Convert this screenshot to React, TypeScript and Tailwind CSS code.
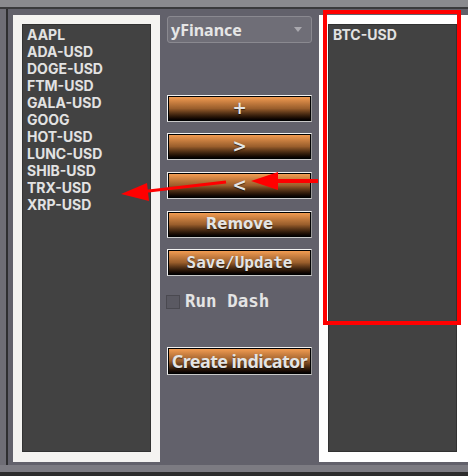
import React from 'react';

const left = ['AAPL', 'ADA-USD', 'DOGE-USD', 'FTM-USD', 'GALA-USD', 'GOOG', 'HOT-USD', 'LUNC-USD', 'SHIB-USD', 'TRX-USD', 'XRP-USD'];
const right = ['BTC-USD'];

function OrangeButton({ label, className, textClass }: { label: string; className?: string; textClass: string }) {
  return (
    <div className={`w-[145px] h-[27px] border border-t-[#f2f2f2] border-l-[#f2f2f2] border-r-[#9a9a9a] border-b-[#c8c8c8] ${className ?? ''}`}>
      <div className="w-full h-full border border-black bg-gradient-to-b from-[#f29c52] via-[#9a5e2c] to-[#050201] flex items-center justify-center">
        <span className={`text-[#e4e4e4] leading-none ${textClass}`} style={{ textShadow: '0 1px 1px rgba(0,0,0,0.6)' }}>
          {label}
        </span>
      </div>
    </div>
  );
}

function ListBox({ items }: { items: string[] }) {
  return (
    <div className="h-full bg-[#424242] border border-[#323232] pt-[1px] pl-[4px]">
      {items.map((s) => (
        <div key={s} className="text-[14px] leading-[17px] font-bold text-[#e2e2e2] font-['Inter',sans-serif]">
          {s}
        </div>
      ))}
    </div>
  );
}

export default function App() {
  return (
    <div className="relative w-[468px] h-[476px] bg-[#2c2c2c] flex flex-col overflow-hidden">
      {/* window top */}
      <div className="h-[7px] bg-[#8a8a8e]" />
      <div className="h-[2px] bg-[#3a3a3c]" />

      <div className="flex-1 flex">
        <div className="w-[6px] bg-[#6e6d75]" />
        <div className="w-[2px] bg-[#2e2e30]" />

        {/* main panel */}
        <div className="flex-1 bg-[#62616b] flex pt-[6px] pl-[5px] pb-[3px]">
          {/* left list */}
          <div className="w-[147px] bg-[#f4f3f1] pt-[9px] pb-[10px] px-[9px]">
            <ListBox items={left} />
          </div>

          {/* controls */}
          <div className="w-[159px] pl-[7px] pt-[1px] flex flex-col">
            <div className="w-[145px] h-[27px] rounded-[3px] bg-[#6f6e77] border border-[#8a8990] flex items-center justify-between pl-[3px] pr-[9px]">
              <span className="text-[16px] font-bold text-[#e6e6e6] leading-none font-['Noto_Sans',sans-serif]">
                yFinance
              </span>
              <svg width="8" height="5" viewBox="0 0 8 5">
                <polygon points="0,0 8,0 4,5" fill="#a9a8ae" />
              </svg>
            </div>

            <OrangeButton label="+" className="mt-[52px]" textClass="text-[17px] font-bold font-['DejaVu_Sans',sans-serif]" />
            <OrangeButton label=">" className="mt-[11px]" textClass="text-[17px] font-bold font-['DejaVu_Sans',sans-serif]" />
            <OrangeButton label="<" className="mt-[12px]" textClass="text-[17px] font-bold font-['DejaVu_Sans',sans-serif]" />
            <OrangeButton label="Remove" className="mt-[12px]" textClass="text-[15px] font-bold font-['DejaVu_Sans',sans-serif]" />
            <OrangeButton label="Save/Update" className="mt-[11px]" textClass="text-[16px] font-bold font-['DejaVu_Sans_Mono',monospace]" />

            <div className="mt-[17px] flex items-center gap-[5px] -ml-[1px]">
              <div className="w-[14px] h-[14px] bg-[#5a5962] border border-[#4a4950]" />
              <span className="text-[17.5px] font-bold text-[#e4e4e4] leading-none font-['DejaVu_Sans_Mono',monospace]">Run Dash</span>
            </div>

            <OrangeButton label="Create indicator" className="mt-[36px] h-[28px]" textClass="text-[18px] font-bold tracking-[-0.6px] font-['Noto_Sans',sans-serif]" />
          </div>

          {/* right list */}
          <div className="flex-1 bg-white pt-[9px] pb-[10px] pl-[9px] pr-[11px]">
            <ListBox items={right} />
          </div>
        </div>
      </div>

      {/* window bottom */}
      <div className="h-[7px] bg-[#7c7b82]" />
      <div className="h-[4px] bg-[#2c2c2c]" />

      {/* annotations */}
      <svg className="absolute inset-0 pointer-events-none" width="468" height="476" viewBox="0 0 468 476">
        <rect x="325" y="12" width="134" height="311" fill="none" stroke="#ff0000" strokeWidth="4" />
        <line x1="318" y1="181" x2="270" y2="181" stroke="#ff0000" strokeWidth="4" />
        <polygon points="251,181 278,172 278,190" fill="#ff0000" />
        <line x1="226" y1="182" x2="140" y2="192" stroke="#ff0000" strokeWidth="3" />
        <polygon points="121,194 147,183 149,201" fill="#ff0000" />
      </svg>
    </div>
  );
}
